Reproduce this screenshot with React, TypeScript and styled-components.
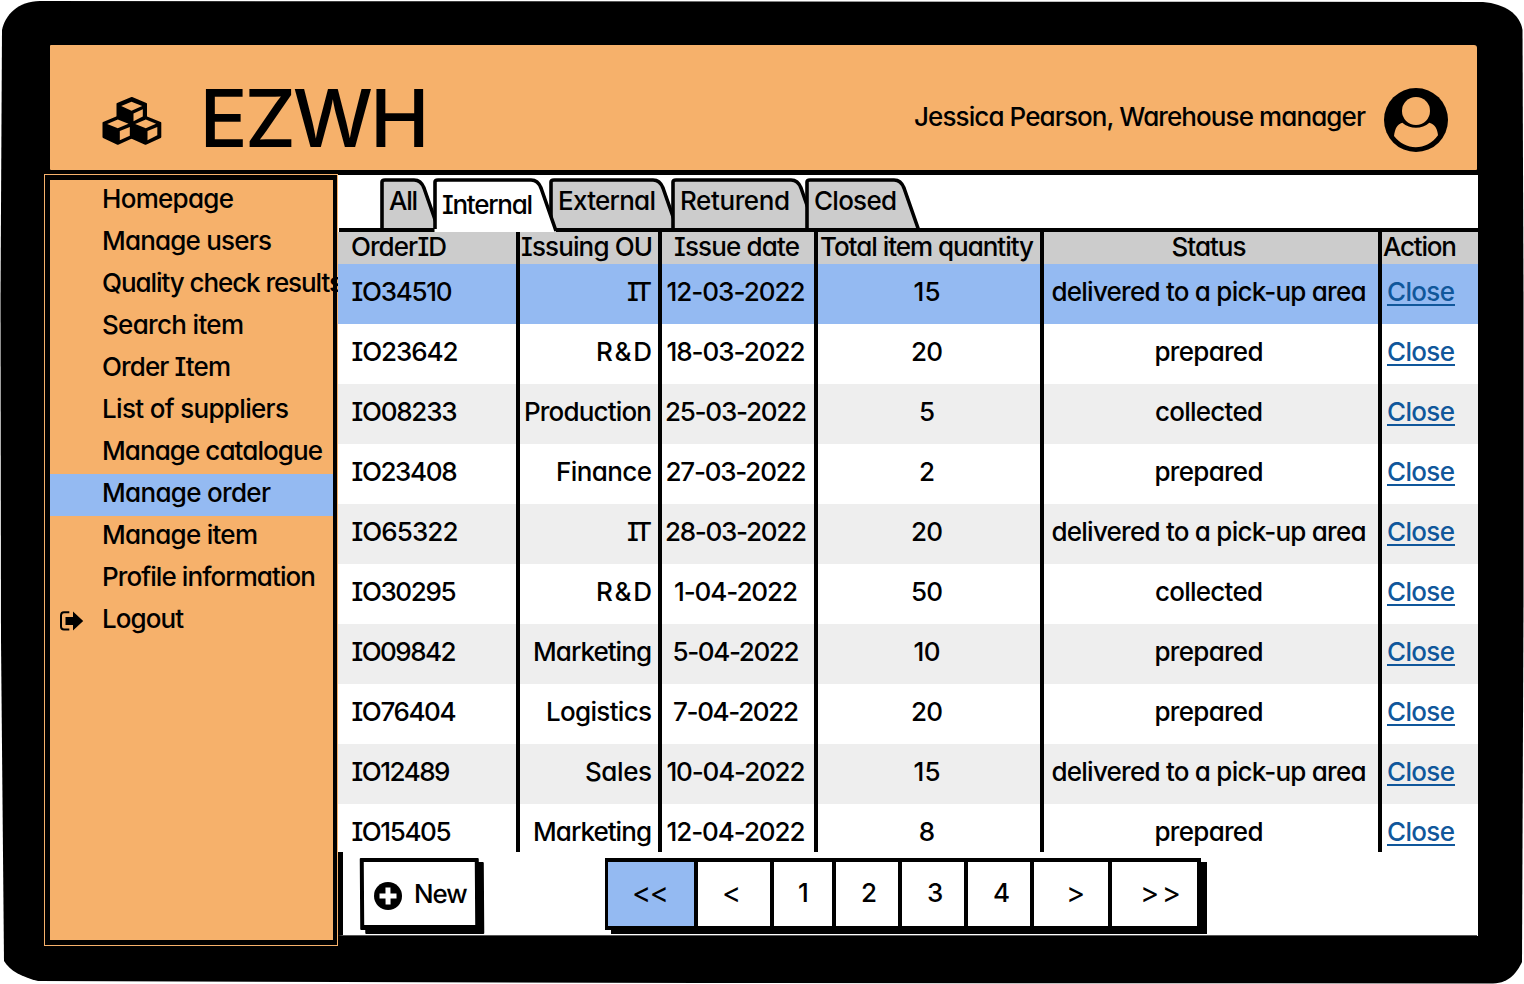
import React, { useLayoutEffect, useRef, useState } from "react";
import styled, { createGlobalStyle } from "styled-components";

const ORANGE = "#f6b16b";
const BLUE = "#94baf2";
const GREY = "#cccccc";
const STRIPE = "#eeeeee";
const LINK = "#10579b";

const GlobalStyle = createGlobalStyle`
  * { box-sizing: border-box; }
  body {
    margin: 0;
    background: #fff;
    color: #000;
    font-family: Inter, "Liberation Sans", sans-serif;
    font-size: 26px;
    font-weight: 450;
    line-height: 30px;
    font-feature-settings: "cv08" 1, "cv11" 1;
    overflow: hidden;
  }
`;

/* A one-line label whose tracking is adjusted so that it spans a given width. */
const LabelText = styled.span`
  display: inline-block;
  flex: none;
  white-space: pre;
`;

function Label({ children, width }: { children: string; width: number }) {
  const ref = useRef<HTMLSpanElement>(null);
  const [tracking, setTracking] = useState(0);
  useLayoutEffect(() => {
    if (ref.current && children.length > 1) {
      const natural = ref.current.getBoundingClientRect().width - tracking * children.length;
      setTracking((width - natural) / (children.length - 1));
    }
  }, [children, width]);
  return (
    <LabelText ref={ref} style={{ letterSpacing: `${tracking}px`, marginRight: `${-tracking}px` }}>
      {children}
    </LabelText>
  );
}

const Device = styled.div`
  width: 1524px;
  height: 984px;
  padding: 45px 46px 0 44px;
  background: #000;
  clip-path: path("M2 30 C5 15 18 1 40 1 L1483 2 C1505 4 1520 14 1522.5 30 L1523.5 300 L1523.5 600 L1522 962 C1517 972 1510 983 1493 983.5 L700 983 L38 981 C22 977 10 971 4 961 L1 640 L0.5 300 Z");
`;

const Header = styled.header`
  display: flex;
  align-items: center;
  height: 125px;
  margin: 0 1.5px 4px 6px;
  padding: 25px 28.5px 0 51.500px;
  background: ${ORANGE};
  border-radius: 1px 3px 1px 1px;
`;

const Brand = styled.h1`
  margin: -4px auto 0 38px;
  font-size: 80px;
  font-weight: 500;
  line-height: 96px;
`;

const User = styled.div`
  display: flex;
  align-items: center;
  gap: 18px;
`;

const UserName = styled.div`
  padding-bottom: 7px;
`;

const Body = styled.div`
  display: flex;
  align-items: flex-start;
`;

const Sidebar = styled.aside`
  width: 294px;
  height: 772px;
  padding: 1px;
  background: ${ORANGE};
  overflow: hidden;
`;

const SidebarFrame = styled.nav`
  height: 770px;
  border: 5px solid #000;
  border-right-width: 4px;
`;

const NavItem = styled.a<{ $active?: boolean }>`
  display: flex;
  align-items: center;
  height: 42px;
  padding: 0 0 4px 10px;
  background: ${(p) => (p.$active ? BLUE : "transparent")};
`;

const NavIcon = styled.span`
  display: flex;
  flex: none;
  width: 42px;
  padding-top: 3px;
`;

const Main = styled.main`
  display: flex;
  flex-direction: column;
  width: 1140px;
  height: 761px;
  margin-top: 1px;
  background: #fff;
`;

const TabBar = styled.div`
  display: flex;
  height: 57px;
  padding: 3px 0 0 42px;
  background: linear-gradient(#000, #000) 1px 53px / 1140px 4px no-repeat;
`;

const TabBox = styled.div<{ $width: number; $step: number; $active?: boolean }>`
  position: relative;
  z-index: ${(p) => (p.$active ? 2 : 1)};
  flex: none;
  width: ${(p) => p.$width}px;
  height: 54px;
  margin-right: ${(p) => p.$step - p.$width}px;
  padding: ${(p) => (p.$active ? 12 : 8)}px 0 0 9px;
`;

const TabShape = styled.svg`
  position: absolute;
  inset: 0;
  z-index: -1;
  overflow: visible;
`;

function Tab(props: { text: string; textWidth: number; width: number; step: number; active?: boolean }) {
  const w = props.width;
  const foot = props.active ? 54 : 50;
  return (
    <TabBox $width={w} $step={props.step} $active={props.active}>
      <TabShape width={w} height={54}>
        <path
          d={`M1.500 ${foot} V4 Q1.500 2 5 2 H${w - 27} Q${w - 20} 2 ${w - 17} 10 L${w - 2} ${foot} Z`}
          fill={props.active ? "#fff" : GREY}
        />
        <path
          d={`M2 51 V4 Q2 2 5 2 H${w - 27} Q${w - 20} 2 ${w - 17} 10 L${w - 2} 53`}
          fill="none"
          stroke="#000"
          strokeWidth={3.6}
        />
      </TabShape>
      <Label width={props.textWidth}>{props.text}</Label>
    </TabBox>
  );
}

const Table = styled.div`
  height: 620px;
  overflow: hidden;
`;

const Row = styled.div<{ $height: number; $fill: string }>`
  display: grid;
  grid-template-columns: 182px 142px 156px 226px 338px 96px;
  height: ${(p) => p.$height}px;
  background: ${(p) => p.$fill};
`;

const Cell = styled.div<{ $align?: string; $pad?: string }>`
  display: flex;
  align-items: center;
  justify-content: ${(p) => p.$align || "center"};
  padding: ${(p) => p.$pad || "0"};
  padding-bottom: 4px;
  border-right: 4px solid #000;
  &:last-child { border-right: 0; }
`;

const HeadCell = styled(Cell)`
  padding-bottom: 5px;
`;

const CloseLink = styled.a`
  display: flex;
  height: 29px;
  margin-top: -2px;
  color: ${LINK};
  border-bottom: 2px solid ${LINK};
`;

const Footer = styled.footer`
  display: flex;
  align-items: flex-start;
  flex: 1;
  margin-right: 1px;
  padding: 6px 0 0 17px;
  border-left: 5px solid #000;
  border-bottom: 1px solid #555;
`;

const NewButton = styled.button`
  display: flex;
  align-items: center;
  gap: 12px;
  width: 119px;
  height: 72px;
  margin: 0;
  padding: 0 0 0 10px;
  font: inherit;
  font-feature-settings: inherit;
  color: #000;
  background: #fff;
  border: 4px solid #000;
  border-bottom-width: 5px;
  border-radius: 1px;
  box-shadow: 5px 4px 0 #000;
  transform: skewX(0.4deg);
`;

const Pager = styled.div`
  display: flex;
  width: 596px;
  height: 72px;
  margin-left: 126px;
  border: 4px solid #000;
  border-width: 4px 4px 4px 3px;
  box-shadow: 6px 4px 0 #000;
`;

const Page = styled.div<{ $width: number; $pad: number; $active?: boolean }>`
  flex: none;
  width: ${(p) => p.$width}px;
  padding: 16px 0 0 ${(p) => p.$pad}px;
  background: ${(p) => (p.$active ? BLUE : "#fff")};
  border-right: 4px solid #000;
  &:last-child { border-right: 0; }
`;

const ArrowPage = styled(Page)`
  font-size: 29px;
  font-weight: 430;
`;

const Cubes = () => (
  <svg width="60" height="50" viewBox="101.5 95 60 50">
    <g fill="#000" stroke="#000" strokeWidth="2" strokeLinejoin="round">
      <path d="M131.3 98L145.5 104V117.5L131 124L117 117.5V104Z" />
      <path d="M117.3 117L131 122.5V137.5L117.3 143.8L103 137V123Z" />
      <path d="M145 117L159.8 123V137L145 143.8L131 137.5V122.5Z" />
    </g>
    <g fill={ORANGE}>
      <path d="M120.7 106L131 101.7L141.7 106L131 110.7Z" />
      <path d="M133 113.5L142.3 109.3V116.5L133 121.3Z" />
      <path d="M106.7 124L117.3 119.5L128 123.7L117.3 128.3Z" />
      <path d="M119.3 131L129.3 127V135.7L119.3 140.3Z" />
      <path d="M134.7 124L145.3 119.5L155.5 123.7L145.3 128.3Z" />
      <path d="M147 131L156.8 127V135.2L147 140.3Z" />
    </g>
  </svg>
);

const Avatar = () => (
  <svg width="64" height="64" viewBox="0 0 64 64">
    <circle cx="32" cy="32" r="32" />
    <g fill={ORANGE}>
      <circle cx="32" cy="23" r="14" />
      <path d="M10 48C11 41 13 36 18.3 34.7C26 41.5 38 41.5 45.3 34.7C51 36 53.5 41 54 47.3C43 63 21 63 10 48Z" />
    </g>
  </svg>
);

const LogoutIcon = () => (
  <svg width="24" height="20" viewBox="0 0 24 20">
    <path d="M9.3 1.2H4Q1 1.2 1 4.5V15.5Q1 18.6 4 18.6H9.3" fill="none" stroke="#000" strokeWidth="2" />
    <path d="M5.5 6H13V0.5L23.2 10L13 19.5V14H5.5Z" />
  </svg>
);

const PlusSvg = styled.svg`
  flex: none;
  margin-top: 5px;
`;

const PlusIcon = () => (
  <PlusSvg width="28" height="28" viewBox="0 0 28 28">
    <circle cx="14" cy="14" r="14" />
    <path d="M14 5.5V22.5M5.5 14H22.5" stroke="#fff" strokeWidth="5" />
  </PlusSvg>
);

const nav = [
  { text: "Homepage", width: 132 },
  { text: "Manage users", width: 170 },
  { text: "Quality check results", width: 241 },
  { text: "Search item", width: 142 },
  { text: "Order Item", width: 129 },
  { text: "List of suppliers", width: 187 },
  { text: "Manage catalogue", width: 221 },
  { text: "Manage order", width: 169 },
  { text: "Manage item", width: 156 },
  { text: "Profile information", width: 214 },
  { text: "Logout", width: 82 },
];

type Text = [string, number];
const delivered: Text = ["delivered to a pick-up area", 315];
const prepared: Text = ["prepared", 109];
const collected: Text = ["collected", 108];

const orders: { id: Text; unit: Text; date: Text; quantity: Text; status: Text }[] = [
  { id: ["IO34510", 101], unit: ["IT", 25], date: ["12-03-2022", 139], quantity: ["15", 27], status: delivered },
  { id: ["IO23642", 107], unit: ["R&D", 56], date: ["18-03-2022", 139], quantity: ["20", 32], status: prepared },
  { id: ["IO08233", 106], unit: ["Production", 128], date: ["25-03-2022", 142], quantity: ["5", 16], status: collected },
  { id: ["IO23408", 106], unit: ["Finance", 96], date: ["27-03-2022", 141], quantity: ["2", 16], status: prepared },
  { id: ["IO65322", 107], unit: ["IT", 25], date: ["28-03-2022", 142], quantity: ["20", 32], status: delivered },
  { id: ["IO30295", 105], unit: ["R&D", 56], date: ["1-04-2022", 124], quantity: ["50", 32], status: collected },
  { id: ["IO09842", 105], unit: ["Marketing", 119], date: ["5-04-2022", 127], quantity: ["10", 27], status: prepared },
  { id: ["IO76404", 105], unit: ["Logistics", 106], date: ["7-04-2022", 126], quantity: ["20", 32], status: prepared },
  { id: ["IO12489", 99], unit: ["Sales", 67], date: ["10-04-2022", 139], quantity: ["15", 27], status: delivered },
  { id: ["IO15405", 100], unit: ["Marketing", 119], date: ["12-04-2022", 139], quantity: ["8", 17], status: prepared },
];

export default function App() {
  return (
    <>
      <GlobalStyle />
      <Device>
        <Header>
          <Cubes />
          <Brand>
            <Label width={230}>EZWH</Label>
          </Brand>
          <User>
            <UserName>
              <Label width={452}>Jessica Pearson, Warehouse manager</Label>
            </UserName>
            <Avatar />
          </User>
        </Header>
        <Body>
          <Sidebar>
            <SidebarFrame>
              {nav.map((item) => (
                <NavItem key={item.text} $active={item.text === "Manage order"}>
                  <NavIcon>{item.text === "Logout" && <LogoutIcon />}</NavIcon>
                  <Label width={item.width}>{item.text}</Label>
                </NavItem>
              ))}
            </SidebarFrame>
          </Sidebar>
          <Main>
            <TabBar>
              <Tab text="All" textWidth={29} width={61} step={53} />
              <Tab text="Internal" textWidth={91} width={125} step={116} active />
              <Tab text="External" textWidth={98} width={131} step={122} />
              <Tab text="Returend" textWidth={110} width={147} step={134} />
              <Tab text="Closed" textWidth={83} width={116} step={116} />
            </TabBar>
            <Table>
              <Row $height={32} $fill={GREY}>
                <HeadCell $align="flex-start" $pad="0 0 0 13px"><Label width={96}>OrderID</Label></HeadCell>
                <HeadCell $align="flex-end" $pad="0 5px 0 0"><Label width={132}>Issuing OU</Label></HeadCell>
                <HeadCell $pad="0 2px 0 0"><Label width={126}>Issue date</Label></HeadCell>
                <HeadCell $pad="0 4px 0 0"><Label width={214}>Total item quantity</Label></HeadCell>
                <HeadCell $pad="0 4px 0 0"><Label width={75}>Status</Label></HeadCell>
                <HeadCell $align="flex-start" $pad="0 0 0 1px"><Label width={74}>Action</Label></HeadCell>
              </Row>
              {orders.map((o, i) => (
                <Row key={o.id[0]} $height={60} $fill={i === 0 ? BLUE : i % 2 ? "#fff" : STRIPE}>
                  <Cell $align="flex-start" $pad="0 0 0 13.5px"><Label width={o.id[1]}>{o.id[0]}</Label></Cell>
                  <Cell $align="flex-end" $pad="0 6px 0 0"><Label width={o.unit[1]}>{o.unit[0]}</Label></Cell>
                  <Cell $pad="0 4px 0 0"><Label width={o.date[1]}>{o.date[0]}</Label></Cell>
                  <Cell $pad="0 4px 0 0"><Label width={o.quantity[1]}>{o.quantity[0]}</Label></Cell>
                  <Cell $pad="0 4px 0 0"><Label width={o.status[1]}>{o.status[0]}</Label></Cell>
                  <Cell $align="flex-start" $pad="0 0 0 5px">
                    <CloseLink><Label width={68}>Close</Label></CloseLink>
                  </Cell>
                </Row>
              ))}
            </Table>
            <Footer>
              <NewButton>
                <PlusIcon />
                <Label width={54}>New</Label>
              </NewButton>
              <Pager>
                <ArrowPage $width={90} $pad={24} $active><Label width={37}>{"<<"}</Label></ArrowPage>
                <ArrowPage $width={76} $pad={24}><Label width={18}>{"<"}</Label></ArrowPage>
                <Page $width={62} $pad={24}><Label width={12}>1</Label></Page>
                <Page $width={66} $pad={25}><Label width={17}>2</Label></Page>
                <Page $width={66} $pad={25}><Label width={17}>3</Label></Page>
                <Page $width={66} $pad={25}><Label width={17}>4</Label></Page>
                <ArrowPage $width={78} $pad={32}><Label width={18}>{">"}</Label></ArrowPage>
                <ArrowPage $width={85} $pad={28}><Label width={41}>{">>"}</Label></ArrowPage>
              </Pager>
            </Footer>
          </Main>
        </Body>
      </Device>
    </>
  );
}
